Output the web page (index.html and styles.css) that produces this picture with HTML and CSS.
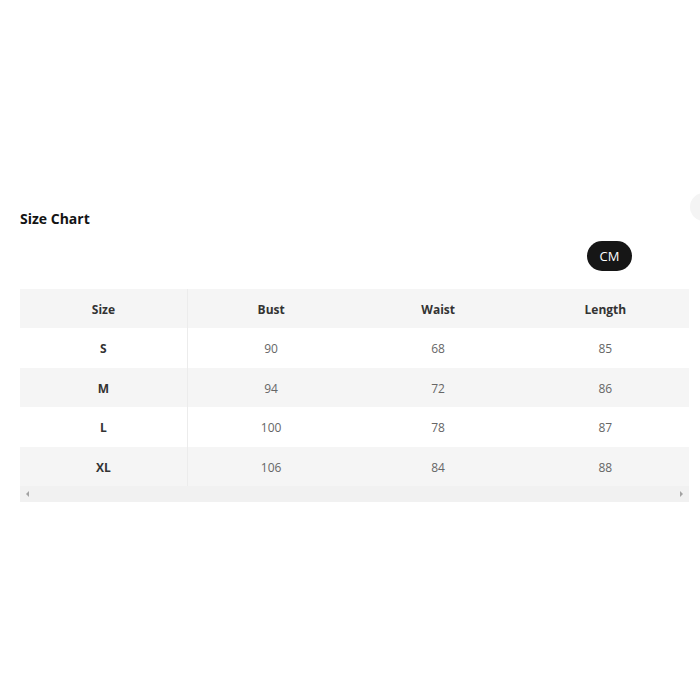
FILE: index.html
```html
<!DOCTYPE html>
<html>
<head>
<meta charset="utf-8">
<link rel="stylesheet" href="styles.css">
</head>
<body>
<div class="edge-circle"></div>
<main class="chart">
  <h2 class="title">Size Chart</h2>
  <div class="unit-row"><button class="unit">CM</button></div>
  <div class="table-wrap">
    <table class="size-table">
      <thead>
        <tr><th class="first">Size</th><th>Bust</th><th>Waist</th><th>Length</th></tr>
      </thead>
      <tbody>
        <tr><td class="first">S</td><td>90</td><td>68</td><td>85</td></tr>
        <tr class="alt"><td class="first">M</td><td>94</td><td>72</td><td>86</td></tr>
        <tr><td class="first">L</td><td>100</td><td>78</td><td>87</td></tr>
        <tr class="alt"><td class="first">XL</td><td>106</td><td>84</td><td>88</td></tr>
      </tbody>
    </table>
    <div class="scrollbar">
      <span class="arrow left"></span>
      <span class="arrow right"></span>
    </div>
  </div>
</main>
</body>
</html>
```

FILE: styles.css
```css
html, body {
  margin: 0;
  padding: 0;
  background: #fff;
  font-family: "Open Sans", "Noto Sans", sans-serif;
}
body {
  position: relative;
  width: 700px;
  height: 700px;
  overflow: hidden;
}
.edge-circle {
  position: absolute;
  left: 690px;
  top: 193px;
  width: 28px;
  height: 28px;
  border-radius: 50%;
  background: #f4f4f4;
}
.chart {
  padding: 208px 11px 0 20px;
  display: flex;
  flex-direction: column;
}
.title {
  margin: 0;
  font-size: 14px;
  line-height: 22px;
  font-weight: 700;
  color: #141414;
}
.unit-row {
  display: flex;
  padding-left: 567px;
  margin-top: 11px;
}
.unit {
  width: 45px;
  height: 30px;
  border: none;
  border-radius: 15px;
  background: #161616;
  color: #fff;
  font-family: "Open Sans", sans-serif;
  font-size: 13px;
  padding: 0;
  line-height: 30px;
}
.table-wrap {
  margin-top: 18px;
  width: 669px;
}
.size-table {
  width: 100%;
  border-collapse: collapse;
  table-layout: fixed;
}
.size-table th,
.size-table td {
  box-sizing: border-box;
  text-align: center;
  padding: 2px 0 0;
  font-size: 12px;
}
.size-table th {
  height: 39px;
  background: #f5f5f5;
  color: #333;
  font-weight: 700;
}
.size-table td {
  height: 39.5px;
  color: #666;
  font-weight: 400;
}
.size-table td.first {
  color: #333;
  font-weight: 700;
}
.size-table .first {
  border-right: 1px solid #ececec;
}
.size-table tr.alt td {
  background: #f5f5f5;
}
.scrollbar {
  height: 16px;
  background: #f1f1f1;
  display: flex;
  justify-content: space-between;
  align-items: center;
  padding: 0 6px;
}
.arrow {
  width: 0;
  height: 0;
  border-top: 3px solid transparent;
  border-bottom: 3px solid transparent;
}
.arrow.left {
  border-right: 3px solid #a3a3a3;
}
.arrow.right {
  border-left: 3px solid #a3a3a3;
}
```
